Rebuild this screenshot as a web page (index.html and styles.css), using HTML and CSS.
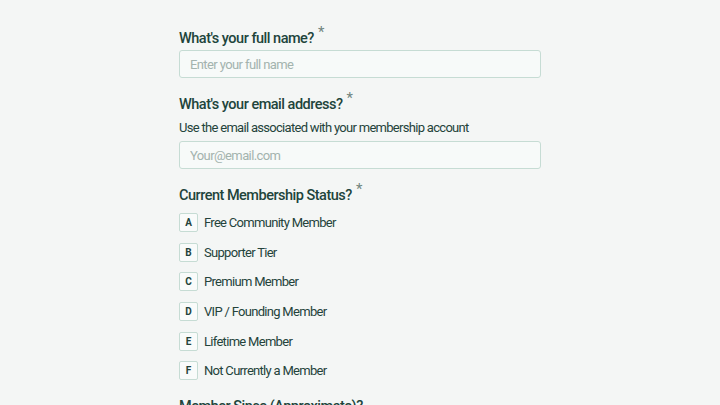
FILE: index.html
```html
<!DOCTYPE html>
<html>
<head>
<meta charset="utf-8">
<link rel="stylesheet" href="styles.css">
</head>
<body>
<main class="form">
  <section class="field">
    <label class="label">What's your full name? <span class="req">*</span></label>
    <input class="input" type="text" placeholder="Enter your full name">
  </section>
  <section class="field">
    <label class="label">What's your email address? <span class="req">*</span></label>
    <p class="desc">Use the email associated with your membership account</p>
    <input class="input" type="text" placeholder="Your@email.com">
  </section>
  <section class="field">
    <label class="label">Current Membership Status? <span class="req">*</span></label>
    <ul class="options">
      <li class="option"><span class="key">A</span><span>Free Community Member</span></li>
      <li class="option"><span class="key">B</span><span>Supporter Tier</span></li>
      <li class="option"><span class="key">C</span><span>Premium Member</span></li>
      <li class="option"><span class="key">D</span><span>VIP / Founding Member</span></li>
      <li class="option"><span class="key">E</span><span>Lifetime Member</span></li>
      <li class="option"><span class="key">F</span><span>Not Currently a Member</span></li>
    </ul>
  </section>
  <section class="field">
    <label class="label">Member Since (Approximate)?</label>
  </section>
</main>
</body>
</html>
```
FILE: styles.css
```css
html, body {
  margin: 0;
  padding: 0;
  background: #f4f6f5;
  font-family: Roboto, Inter, sans-serif;
  color: #1f3d36;
}
.form {
  width: 362px;
  margin: 0 auto;
  padding-top: 27px;
  display: flex;
  flex-direction: column;
  gap: 15px;
}
.field {
  display: flex;
  flex-direction: column;
}
.label {
  font-size: 14.5px;
  font-weight: 500;
  letter-spacing: -0.5px;
  line-height: 20px;
  padding-top: 2px;
  margin-bottom: 1px;
  color: #21443b;
}
.req {
  color: #72857f;
  font-size: 15px;
  font-weight: 400;
  vertical-align: super;
  line-height: 0;
  margin-left: 1px;
}
.desc {
  margin: 3px 0 4px;
  font-size: 13px;
  letter-spacing: -0.7px;
  line-height: 18px;
  color: #24433b;
}
.input {
  box-sizing: border-box;
  height: 28px;
  width: 100%;
  border: 1px solid #c6dcd4;
  border-radius: 3px;
  background: #f7faf9;
  padding: 0 10px;
  font-family: inherit;
  font-size: 13px;
  letter-spacing: -0.6px;
  color: #1f3d36;
  outline: none;
}
.input::placeholder {
  color: #a3b3ae;
}
.options {
  list-style: none;
  margin: 6px 0 0;
  padding: 0;
  display: flex;
  flex-direction: column;
  gap: 10.7px;
}
.option {
  display: flex;
  align-items: center;
  gap: 6px;
  font-size: 13px;
  letter-spacing: -0.7px;
  line-height: 19px;
  color: #24433b;
}
.key {
  box-sizing: border-box;
  width: 19px;
  height: 19px;
  border: 1px solid #c6dcd4;
  border-radius: 2px;
  background: #f9fbfa;
  display: flex;
  align-items: center;
  justify-content: center;
  font-size: 10px;
  font-weight: 700;
  letter-spacing: 0;
}
```
